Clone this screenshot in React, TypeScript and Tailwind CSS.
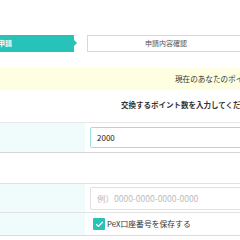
import { Check } from 'lucide-react';

const font = "font-['Noto_Sans_CJK_JP','Noto_Sans',sans-serif]";

export default function App() {
  return (
    <div className={`w-[240px] h-[240px] overflow-hidden bg-white text-[#333] ${font}`}>
      <div className="w-[600px]">
        {/* steps */}
        <div className="mt-[35px] flex h-[17px]">
          <div className="relative ml-[-115px] flex w-[189px] items-center justify-end bg-[#27c3b8] pr-[62px] text-[7px] font-bold leading-none text-white">
            ポイント交換申請
            <span className="absolute right-[-3px] top-[5px] h-0 w-0 border-y-[3.5px] border-l-[3px] border-y-transparent border-l-[#27c3b8]" />
          </div>
          <div className="ml-[13px] flex w-[158px] items-center justify-center border border-[#d8d8d8] bg-white text-[7px] leading-none text-[#555]">
            申請内容確認
          </div>
        </div>

        {/* current points */}
        <div className="mt-[16px] flex h-[22px] items-center bg-[#fefee2] pl-[175px] text-[7.6px] leading-none">
          現在のあなたのポイントは
        </div>

        <div className="mt-[10px] flex h-[10px] items-center pl-[121px] text-[7.5px] font-bold leading-none">
          交換するポイント数を入力してください
        </div>

        {/* form table */}
        <div className="mt-[12px] border-b border-[#dcdcdc]">
          <div className="flex h-[30px] border-t border-[#ebe6ea]">
            <div className="w-[85px] bg-[#f0fcfc]" />
            <div className="flex flex-1 items-center pl-[5px]">
              <div className="flex h-[21px] w-[220px] items-center rounded-[2px] border border-[#98e2dd] pl-[6px] text-[8px] leading-none text-[#222]">
                2000
              </div>
            </div>
          </div>
          <div className="flex h-[31px] border-t border-[#d4d4d4]">
            <div className="w-[85px] bg-white" />
            <div className="flex-1" />
          </div>
          <div className="flex h-[29px] border-t border-[#e2e2e2]">
            <div className="w-[85px] bg-[#f0fcfc]" />
            <div className="flex flex-1 items-center pl-[5px]">
              <div className="flex h-[23px] w-[220px] items-center rounded-[2px] border border-[#e0e0e0] pl-[6px] text-[8.5px] leading-none text-[#bbb]">
                例）0000-0000-0000-0000
              </div>
            </div>
          </div>
          <div className="flex h-[23px] border-t border-[#e2e2e2]">
            <div className="w-[85px] bg-[#f0fcfc]" />
            <div className="flex flex-1 items-center gap-[2px] pl-[8px] text-[7.8px] leading-none">
              <span className="flex h-[12px] w-[12px] items-center justify-center rounded-[1px] bg-[#27c3b8]">
                <Check className="h-[9px] w-[9px] text-white" strokeWidth={3.5} />
              </span>
              PeX口座番号を保存する
            </div>
          </div>
        </div>
      </div>
    </div>
  );
}
